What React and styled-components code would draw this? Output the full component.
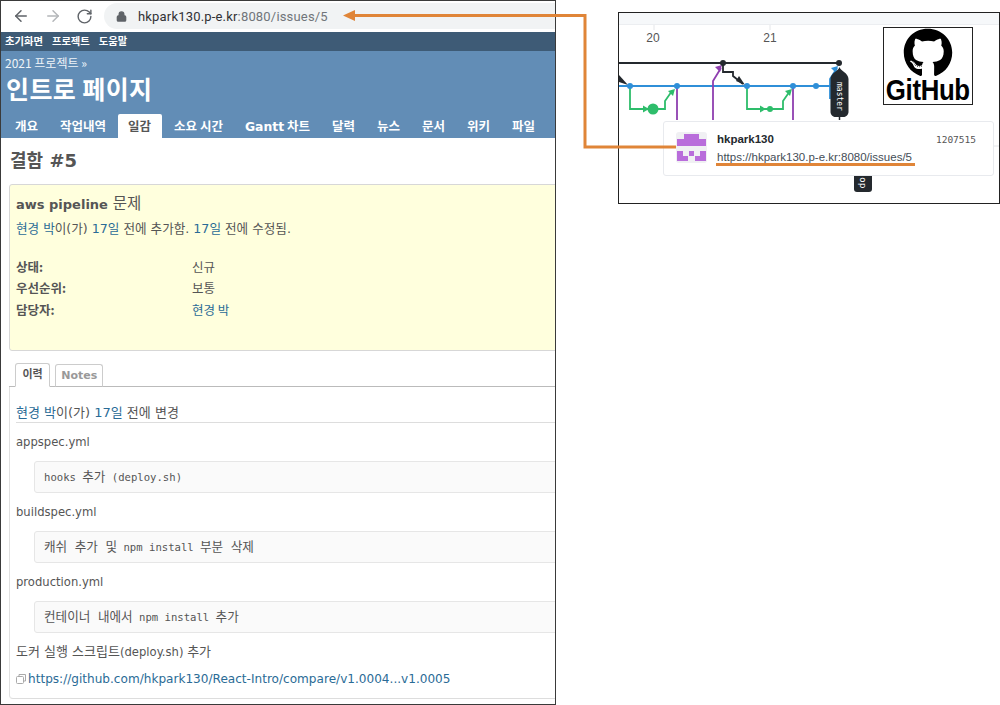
import React from 'react';
import styled, { createGlobalStyle } from 'styled-components';
import { ArrowLeft, ArrowRight, RotateCw, Lock } from 'lucide-react';
import { FaGithub } from 'react-icons/fa';

const KR = '"Noto Sans CJK KR", sans-serif';
const SANS = '"DejaVu Sans", "Noto Sans CJK KR", sans-serif';
const MONO = '"DejaVu Sans Mono", "Noto Sans CJK KR", monospace';

const Global = createGlobalStyle`
  html, body { margin: 0; padding: 0; background: #fff; }
  * { box-sizing: border-box; }
`;

const Page = styled.div`
  position: relative;
  width: 1000px;
  height: 705px;
  display: flex;
  align-items: flex-start;
  overflow: hidden;
  background: #fff;
`;

const Shot = styled.section`
  width: 556px;
  height: 705px;
  flex: none;
  border: 1px solid #3a3a3a;
  overflow: hidden;
  background: #fff;
  display: flex;
  flex-direction: column;
`;

const Chrome = styled.div`
  height: 31px;
  flex: none;
  display: flex;
  align-items: center;
  padding: 0 0 1px 11px;
  color: #5f6368;
`;
const NavIcon = styled.span`
  width: 32px;
  display: flex;
  color: ${p => (p.$off ? '#b4b6b9' : '#5f6368')};
`;
const Omni = styled.div`
  flex: 1;
  height: 26px;
  margin-left: -4px;
  border-radius: 13px 0 0 13px;
  background: #f1f3f4;
  display: flex;
  align-items: center;
  padding-left: 12px;
  gap: 11px;
`;
const Url = styled.span`
  font: 13px/1 Roboto, "Liberation Sans", sans-serif;
  color: #303134;
  letter-spacing: 0.18px;
  em { font-style: normal; color: #70757a; }
`;

const TopMenu = styled.nav`
  height: 19px;
  flex: none;
  background: #3e5b76;
  display: flex;
  align-items: center;
  gap: 9px;
  padding-left: 4px;
  font: 700 10.3px/1 ${KR};
  color: #fff;
`;

const Header = styled.header`
  height: 87px;
  flex: none;
  background: #628db6;
  color: #fff;
  display: flex;
  flex-direction: column;
  padding: 5px 0 0 0;
`;
const Crumb = styled.div`
  font: 12px/14px ${KR};
  padding-left: 4px;
  color: #eef3f8;
`;
const Title = styled.h1`
  margin: 3px 0 0;
  padding-left: 5px;
  font: 700 25px/31px ${KR};
  letter-spacing: 0.4px;
`;
const Tabs = styled.div`
  margin-top: auto;
  display: flex;
  padding-left: 3px;
  height: 24px;
`;
const Tab = styled.div`
  padding: 0 11px 0 ${p => (p.$on ? 10 : 11)}px;
  margin: 0 ${p => (p.$on ? 1 : 0)}px;
  height: 24px;
  font: 700 12.5px/24px ${KR};
  color: ${p => (p.$on ? '#555' : '#fff')};
  background: ${p => (p.$on ? '#fff' : 'transparent')};
  border-radius: 2px 2px 0 0;
  white-space: nowrap;
  text-align: center;
  b { font-family: "DejaVu Sans", sans-serif; font-size: 12.4px; }
`;

const Main = styled.main`
  padding: 0 0 0 8px;
  margin-right: -12px;
  flex: 1;
  display: flex;
  flex-direction: column;
  font: 11.5px/1 ${SANS};
  color: #555;
`;
const H2 = styled.h2`
  margin: 10px 0 0 1px;
  font: 700 18px/26px ${SANS};
  color: #555;
  height: 36px;
`;
const IssueBox = styled.div`
  height: 167px;
  background: #ffffdd;
  border: 1px solid #d7d7d7;
  border-radius: 3px;
  padding: 9px 6px;
`;
const Subject = styled.h3`
  margin: 0;
  font: 400 15.5px/20px ${SANS};
  color: #555;
  b { font-weight: 700; font-size: 13px; }
`;
const Meta = styled.p`
  margin: 6px 0 0;
  font: 12.6px/16px ${SANS};
  color: #555;
`;
const A = styled.a`
  color: #2a6b96;
`;
const Attrs = styled.dl`
  margin: 19px 0 0;
  display: grid;
  grid-template-columns: 176px 1fr;
  grid-auto-rows: 21.5px;
  align-items: center;
  font: 12.5px/16px ${KR};
  dt { font-weight: 700; color: #555; }
  dd { margin: 0; }
`;

const HistoryTabs = styled.div`
  margin-top: 12px;
  height: 24px;
  display: flex;
  align-items: flex-end;
  gap: 5px;
  padding-left: 6px;
  border-bottom: 1px solid #bbb;
`;
const HTab = styled.div`
  height: ${p => (p.$on ? 24 : 23)}px;
  padding: 0 ${p => (p.$on ? 6.5 : 5)}px;
  margin-bottom: -1px;
  border: 1px solid #ccc;
  border-bottom: ${p => (p.$on ? '1px solid #fff' : '1px solid #bbb')};
  border-radius: 3px 3px 0 0;
  background: #fff;
  font: 700 11px/21px ${SANS};
  color: ${p => (p.$on ? '#555' : '#999')};
`;

const Journal = styled.div`
  height: 312px;
  border-left: 1px solid #e0e0e0;
  border-bottom: 1px solid #ddd;
  border-radius: 0 0 0 4px;
  padding: 17px 0 0 6px;
`;
const Who = styled.h4`
  margin: 0;
  height: 19px;
  border-bottom: 1px solid #ddd;
  font: 400 13px/17px ${SANS};
  color: #555;
`;
const Para = styled.p`
  margin: ${p => p.$t ?? 10}px 0 0;
  font: 11.6px/18px ${SANS};
  color: #555;
  height: 18px;
  span { font-size: 13px; }
`;
const Pre = styled.pre`
  margin: 10px 0 0 18px;
  height: 32px;
  background: #fafafa;
  border: 1px solid #e6e6e6;
  border-radius: 3px;
  padding: 0 9px;
  font: 10.6px/29px ${MONO};
  color: #555;
  span { font-size: 12.6px; }
`;
const LinkRow = styled.p`
  margin: 9px 0 0;
  display: flex;
  align-items: center;
  gap: 2px;
  font: 12.08px/18px ${SANS};
  color: #2a6b96;
  white-space: nowrap;
  svg { flex: none; }
`;

const Figure = styled.figure`
  position: relative;
  margin: 12px 0 0 62px;
  width: 382px;
  height: 192px;
  flex: none;
  border: 1px solid #222;
  background: #fff;
  overflow: hidden;
`;
const Strip = styled.div`
  height: 12px;
  background: #f6f8fa;
  border-bottom: 1px solid #eceef1;
`;
const Graph = styled.svg`
  display: block;
`;
const GitHubBox = styled.div`
  position: absolute;
  left: 264px;
  top: 14px;
  width: 90px;
  height: 78px;
  border: 1px solid #222;
  background: #fff;
  display: flex;
  flex-direction: column;
  align-items: center;
  color: #000;
  overflow: hidden;
  svg { flex: none; }
`;
const GitHubWord = styled.span`
  font: 700 30px/27px "Liberation Sans", sans-serif;
  letter-spacing: -0.4px;
  margin-top: -2px;
  transform: scaleX(0.86);
  white-space: nowrap;
`;
const HoverCard = styled.div`
  position: absolute;
  left: 44px;
  top: 108px;
  width: 331px;
  height: 55px;
  background: #fff;
  border: 1px solid #e8eaee;
  border-radius: 3px;
  display: flex;
  align-items: flex-start;
  padding: 10px 16px 0 12px;
  gap: 10px;
`;
const Avatar = styled.svg`
  flex: none;
  background: #f0f0f3;
  border-radius: 3px;
`;
const CardText = styled.div`
  flex: 1;
  min-width: 0;
  display: flex;
  flex-direction: column;
  gap: 3px;
`;
const CardHead = styled.div`
  display: flex;
  justify-content: space-between;
  align-items: center;
  font: 700 11.5px/15px "Liberation Sans", sans-serif;
  color: #24292e;
`;
const Sha = styled.span`
  font: 400 9.5px/15px ${MONO};
  color: #555;
  padding-right: 1px;
`;
const CardUrl = styled.div`
  font: 11.5px/15px "Liberation Sans", sans-serif;
  color: #444d56;
`;
const Overlay = styled.svg`
  position: absolute;
  inset: 0;
  pointer-events: none;
`;

const BLUE = '#2f8fd8';
const GREEN = '#2ebd6b';
const PURPLE = '#8f3fb0';

const CommitGraph = () => (
  <Graph width="380" height="178" viewBox="619 26 380 178">
    <g stroke="#e4e6e9" strokeWidth="1"><path d="M654 26v5M770 26v5" /></g>
    <g fontFamily="Liberation Sans, sans-serif" fontSize="12" fill="#555" textAnchor="middle">
      <text x="653" y="43">20</text>
      <text x="770" y="43">21</text>
    </g>
    <path d="M619 64H839" stroke="#24292e" strokeWidth="1.8" fill="none" />
    <path d="M723 64v9h10v4l10 8" stroke="#24292e" strokeWidth="1.8" fill="none" />
    <path d="M745 86l-9-4 3-5z" fill="#24292e" />
    <path d="M628 86l-9-3v-7z" fill="#24292e" />
    <path d="M619 87H832" stroke={BLUE} strokeWidth="1.8" fill="none" />
    <g stroke={GREEN} strokeWidth="1.8" fill="none">
      <path d="M630 87v23h35v-8l7-10" />
      <path d="M747 87v23h36v-8l7-10" />
    </g>
    <g fill={GREEN}>
      <path d="M649 110l-6-3.500v7z" />
      <path d="M766 110l-6-3.500v7z" />
      <path d="M675 90l-7 2 5 5z" />
      <path d="M792 90l-7 2 5 5z" />
      <circle cx="653" cy="110" r="5.500" />
      <circle cx="770" cy="110" r="3" />
    </g>
    <g stroke={PURPLE} strokeWidth="1.8" fill="none">
      <path d="M677 87v34M793 87v34" />
      <path d="M713 121V82l8-13" />
    </g>
    <path d="M722 66l-7 2 5 5z" fill={PURPLE} />
    <path d="M830 100V80l7-11" stroke={BLUE} strokeWidth="1.8" fill="none" />
    <path d="M838 67l-7 2 5 5z" fill={BLUE} />
    <g fill={BLUE}>
      <circle cx="630" cy="87" r="3" />
      <circle cx="677" cy="87" r="3" />
      <circle cx="747" cy="87" r="3" />
      <circle cx="793" cy="87" r="3" />
      <circle cx="816" cy="87" r="3" />
    </g>
    <path d="M839.500 68c1 4 9 6 9 12v33c0 3-3 5-5 5h-8c-2 0-5-2-5-5V80c0-6 8-8 9-12z" fill="#24292e" />
    <path d="M839.500 118v3" stroke="#24292e" strokeWidth="1.500" />
    <text x="0" y="0" transform="translate(837 83) rotate(90)" fontFamily="DejaVu Sans Mono, monospace" fontSize="8" fill="#fff">master</text>
    <circle cx="723" cy="64" r="3" fill="#24292e" />
    <circle cx="839" cy="64" r="3" fill="#24292e" />
    <rect x="854" y="168" width="18" height="25" rx="3" fill="#24292e" />
    <text x="0" y="0" transform="translate(860 178) rotate(90)" fontFamily="DejaVu Sans Mono, monospace" fontSize="9.500" fill="#fff">op</text>
    <path d="M990 147h9" stroke="#e4e6e9" />
  </Graph>
);

const tabs = ['개요', '작업내역', '일감', '소요 시간', 'Gantt 차트', '달력', '뉴스', '문서', '위키', '파일'];

export default function App() {
  return (
    <Page>
      <Global />
      <Shot>
        <Chrome>
          <NavIcon><ArrowLeft size={18} strokeWidth={2} /></NavIcon>
          <NavIcon $off><ArrowRight size={18} strokeWidth={2} /></NavIcon>
          <NavIcon><RotateCw size={17} strokeWidth={2} /></NavIcon>
          <Omni>
            <Lock size={11} strokeWidth={3} color="#5f6368" fill="#5f6368" />
            <Url>hkpark130.p-e.kr<em>:8080/issues/5</em></Url>
          </Omni>
        </Chrome>
        <TopMenu>
          <span>초기화면</span><span>프로젝트</span><span>도움말</span>
        </TopMenu>
        <Header>
          <Crumb>2021 프로젝트 »</Crumb>
          <Title>인트로 페이지</Title>
          <Tabs>
            {tabs.map(t => (
              <Tab key={t} $on={t === '일감'}>
                {t.startsWith('Gantt') ? <><b>Gantt</b> 차트</> : t}
              </Tab>
            ))}
          </Tabs>
        </Header>
        <Main>
          <H2>결함 #5</H2>
          <IssueBox>
            <Subject><b>aws pipeline</b> 문제</Subject>
            <Meta><A>현경 박</A>이(가) <A>17일</A> 전에 추가함. <A>17일</A> 전에 수정됨.</Meta>
            <Attrs>
              <dt>상태:</dt><dd>신규</dd>
              <dt>우선순위:</dt><dd>보통</dd>
              <dt>담당자:</dt><dd><A>현경 박</A></dd>
            </Attrs>
          </IssueBox>
          <HistoryTabs>
            <HTab $on>이력</HTab>
            <HTab>Notes</HTab>
          </HistoryTabs>
          <Journal>
            <Who><A>현경 박</A>이(가) <A>17일</A> 전에 변경</Who>
            <Para $t={10}>appspec.yml</Para>
            <Pre>hooks <span>추가</span> (deploy.sh)</Pre>
            <Para>buildspec.yml</Para>
            <Pre><span>캐쉬 추가 및</span> npm install <span>부분 삭제</span></Pre>
            <Para>production.yml</Para>
            <Pre><span>컨테이너 내에서</span> npm install <span>추가</span></Pre>
            <Para><span>도커 실행 스크립트</span>(deploy.sh) <span>추가</span></Para>
            <LinkRow>
              <svg width="10" height="10" viewBox="0 0 10 10" fill="none" stroke="#aaa" strokeWidth="1">
                <rect x="0.500" y="2.500" width="7" height="7" rx="1" />
                <path d="M3 2.500V.500h6.500V7H7.500" />
              </svg>
              https://github.com/hkpark130/React-Intro/compare/v1.0004...v1.0005
            </LinkRow>
          </Journal>
        </Main>
      </Shot>
      <Figure>
        <Strip />
        <CommitGraph />
        <GitHubBox>
          <FaGithub size={50} />
          <GitHubWord>GitHub</GitHubWord>
        </GitHubBox>
        <HoverCard>
          <Avatar width="31" height="31" viewBox="0 0 31 31">
            <g fill="#b96ddb">
              <path d="M8 2h15v5H8zM1 7h29v7H1zM1 19h6v10H1zM7 24h5v5H7zM13 19h5v5h-5zM24 19h6v10h-6zM19 24h5v5h-5z" />
            </g>
          </Avatar>
          <CardText>
            <CardHead><span>hkpark130</span><Sha>1207515</Sha></CardHead>
            <CardUrl>https://hkpark130.p-e.kr:8080/issues/5</CardUrl>
          </CardText>
        </HoverCard>
      </Figure>
      <Overlay width="1000" height="705" viewBox="0 0 1000 705">
        <path d="M354 15.500H585V147H676" fill="none" stroke="#e08538" strokeWidth="3" />
        <path d="M343 15.500L355 10V21z" fill="#e08538" />
        <path d="M716 164.500H915" fill="none" stroke="#e08538" strokeWidth="3" />
      </Overlay>
    </Page>
  );
}
